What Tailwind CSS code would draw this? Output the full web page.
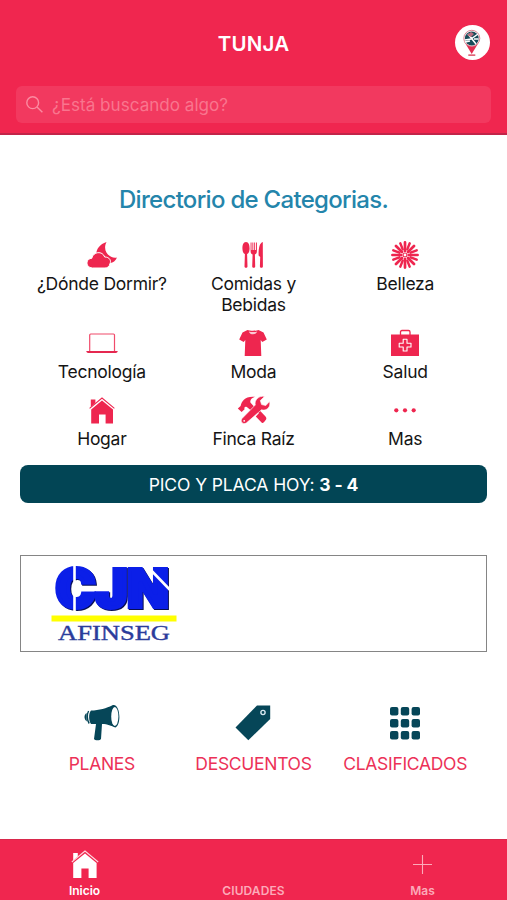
<!DOCTYPE html>
<html lang="es">
    <head>
        <meta charset="UTF-8">
        <meta name="viewport" content="width=device-width, initial-scale=1.0">
        <title>Tunja</title>
        <script src="https://cdn.jsdelivr.net/npm/@tailwindcss/browser@4"></script>
    </head>
    <body class="flex flex-col h-[900px] overflow-hidden bg-white text-[#151515] font-['Inter','Liberation_Sans',sans-serif]">

        <!-- HEADER -->
        <header class="flex flex-col h-[135px] shrink-0 bg-[#f0264f] border-b-2 border-[#c22449]">
            <div class="grid grid-cols-3 items-center h-[86px] px-4">
                <div></div>
                <h1 class="pt-[2px] text-center text-white text-[20.5px] font-semibold tracking-[0.2px]">TUNJA</h1>
                <div class="flex justify-end pr-px">
                    <div class="flex justify-center items-center size-[35px] mt-[-2px] rounded-full bg-white">
                        <svg class="w-[20px] h-[31px]" viewBox="0 0 20 31">
                            <path d="M2.5 15 L9.7 27 L17 15 Z" fill="#e32d50"/>
                            <circle cx="9.8" cy="11.3" r="8" fill="#fff" stroke="#d98493" stroke-width="1"/>
                            <circle cx="9.8" cy="11.5" r="6.9" fill="#174b59"/>
                            <path d="M3 13 L9 12 L16 7 M6 7 L10 12 L14 17 M3 15 L8 14 M12 12 L16.5 12" stroke="#fff" stroke-width="1.5" fill="none"/>
                            <path d="M5 8 L9 5 L12 7 L9 10 Z" fill="#b96b7d"/>
                            <rect x="6.3" y="27.3" width="7" height="1.7" fill="#e06478"/>
                        </svg>
                    </div>
                </div>
            </div>
            <div class="flex items-center gap-[9px] h-[37px] mx-4 px-[10px] rounded-md bg-[#f2395f] text-[#f9758e]">
                <svg class="size-[17px] text-[#fb8ba1]" viewBox="0 0 17 17" fill="none" stroke="currentColor" stroke-width="1.4">
                    <circle cx="6.7" cy="6.7" r="5.9"/>
                    <path d="M11 11 L16.4 16.2"/>
                </svg>
                <span class="pt-px text-[17.1px]">¿Está buscando algo?</span>
            </div>
        </header>
        <!-- /HEADER -->


        <main class="flex flex-col grow">
            <h2 class="mt-[50px] text-center text-[#2485ab] text-[24px] leading-[30px] font-medium tracking-[-0.7px]">Directorio de Categorias.</h2>

            <!-- CATEGORIES -->
            <div class="grid grid-cols-3 gap-y-[14px] mt-[26px] px-[26px] text-center text-[17.5px] leading-[21px] tracking-[-0.25px]">

                <div class="flex flex-col items-center gap-1">
                    <svg class="w-[32px] h-7" viewBox="0 0 32 28" fill="#ee264f">
                        <path d="M20.5 1 C13 3.5 9.5 9 10.5 15 L21 21 C25 23.5 29 21 31 16.5 C25 18.2 15.5 11 20.5 1 Z"/>
                        <path d="M6.5 27 C-1 26.5 -.5 17.5 5.8 17.3 C7 10.5 16.5 9.5 18.7 16 C23.5 16 25.5 19.5 24 22.5 C23.5 25.5 21.5 27 19 27 Z" stroke="#fff" stroke-width="1"/>
                    </svg>
                    <span>¿Dónde Dormir?</span>
                </div>

                <div class="flex flex-col items-center gap-1">
                    <svg class="w-[22px] h-7" viewBox="0 0 22 28" fill="#ee264f">
                        <path d="M4 1 C.7 1 .2 6 .5 8.5 C.7 11 1.5 12.4 2.9 13 L2.5 25.5 C2.5 27.3 5.5 27.3 5.5 25.5 L5.1 13 C6.5 12.4 7.3 11 7.5 8.5 C7.8 6 7.3 1 4 1 Z"/>
                        <path d="M8.6 1.5 H9.5 V9 H10.4 V1.5 H11.3 V9 H12.2 V1.5 H13.1 V9 H14 V1.5 H14.9 V10 C14.9 12.3 14 13 12.9 13.5 L13.2 25.5 C13.2 27.3 10.2 27.3 10.2 25.5 L10.6 13.5 C9.4 13 8.6 12.3 8.6 10 Z"/>
                        <path d="M20.8 1 C17.5 2 16.5 7 16.6 14.5 L18.2 16 L17.9 25.5 C17.9 27.3 20.9 27.3 20.9 25.5 Z"/>
                    </svg>
                    <span class="w-[110px]">Comidas y Bebidas</span>
                </div>

                <div class="flex flex-col items-center gap-1">
                    <svg class="size-7" viewBox="-14 -14 28 28" stroke="#ee264f" fill="none" stroke-linecap="round">
                        <path d="M0 -4 V-12.6 M0 4 V12.6 M-4 0 H-12.6 M4 0 H12.6 M3 -3 L9 -9 M3 3 L9 9 M-3 3 L-9 9 M-3 -3 L-9 -9" stroke-width="2.7"/>
                        <path d="M2.3 -5.6 L4.7 -11.7 M5.6 -2.3 L11.7 -4.7 M5.6 2.3 L11.7 4.7 M2.3 5.6 L4.7 11.7 M-2.3 5.6 L-4.7 11.7 M-5.6 2.3 L-11.7 4.7 M-5.6 -2.3 L-11.7 -4.7 M-2.3 -5.6 L-4.7 -11.7" stroke-width="2.4"/>
                        <circle r="2" stroke-width="1.2"/>
                    </svg>
                    <span>Belleza</span>
                </div>

                <div class="flex flex-col items-center gap-1">
                    <svg class="w-[32px] h-7" viewBox="0 0 32 28">
                        <rect x="3.7" y="5" width="24.8" height="18" rx="1" fill="none" stroke="#f04b6b" stroke-width="1.2"/>
                        <path d="M.3 22 H31.7 C31.7 23.5 30.5 24 29 24 H3 C1.5 24 .3 23.5 .3 22 Z" fill="#e52850"/>
                    </svg>
                    <span>Tecnología</span>
                </div>

                <div class="flex flex-col items-center gap-1">
                    <svg class="w-[28px] h-7" viewBox="0 0 28 28" fill="#ee264f">
                        <path d="M8.5 1 C10.5 2 17.5 2 19.5 1 L24.5 3.5 L27.8 10.5 L23.3 13 L21.7 11 L22.3 27 H5.7 L6.3 11 L4.7 13 L.2 10.5 L3.5 3.5 Z"/>
                        <path d="M9.8 2.4 C11 6.2 17 6.2 18.2 2.4 C16 3.2 12 3.2 9.8 2.4 Z" fill="#fff" fill-opacity=".75"/>
                    </svg>
                    <span>Moda</span>
                </div>

                <div class="flex flex-col items-center gap-1">
                    <svg class="w-[28px] h-7" viewBox="0 0 28 28">
                        <path d="M9.5 6 V3 Q9.5 1.5 11 1.5 H17.5 Q19 1.5 19 3 V6" fill="none" stroke="#ee264f" stroke-width="1.3"/>
                        <rect y="5.5" width="28" height="21.5" fill="#ee264f"/>
                        <path d="M12.2 10.2 H16 V14.2 H20 V18 H16 V22 H12.2 V18 H8.2 V14.2 H12.2 Z" fill="none" stroke="#fff" stroke-width="1.1" stroke-linejoin="round"/>
                    </svg>
                    <span>Salud</span>
                </div>

                <div class="flex flex-col items-center gap-1">
                    <svg class="w-[26px] h-7" viewBox="0 0 26 28" fill="#ee264f">
                        <path d="M1.8 3.5 H6.4 V7 L1.8 11 Z"/>
                        <path d="M.6 12.4 L13 2 L25.4 12.4" fill="none" stroke="#ee264f" stroke-width="1.1"/>
                        <path d="M13 4.4 L24 13.4 V27.5 H16.6 V18.5 H10 V27.5 H2.2 V13.4 Z"/>
                    </svg>
                    <span>Hogar</span>
                </div>

                <div class="flex flex-col items-center gap-1">
                    <svg class="w-[33px] h-7" viewBox="0 0 33 28" fill="#ee264f">
                        <path d="M15 12.5 L18 9.5 L28.5 20.5 C29.8 22 29.5 23.2 28.3 24.6 C27 26.5 26 27.4 24.8 26.8 L18.8 20.5 L22 17 Z"/>
                        <path d="M.8 12.6 L3.6 10 C4.5 5.5 8 -.2 18 .8 C14 2.2 12.6 4.8 13.6 6.8 L17 10.5 L13.5 14 L9.8 11 C7.6 9.8 7 12 7.6 13.3 L4.6 16 Z"/>
                        <path d="M27.5 .6 L23.3 4.6 L24.6 8.6 L28.8 9.6 L32.5 5.6 C34 10.6 30 15.3 24.5 13.8 L9.5 26.8 C6.5 29 2.5 26 5 22.5 L18.3 9 C17 4 22.3 -.8 27.5 .6 Z" stroke="#fff" stroke-width=".6"/>
                        <circle cx="7.2" cy="24.8" r=".9" fill="#fff"/>
                    </svg>
                    <span>Finca Raíz</span>
                </div>

                <div class="flex flex-col items-center gap-1">
                    <svg class="w-[24px] h-7" viewBox="0 0 24 28" fill="#ee264f">
                        <circle cx="3.3" cy="14.3" r="2.1"/>
                        <circle cx="12" cy="14.3" r="2.1"/>
                        <circle cx="20.7" cy="14.3" r="2.1"/>
                    </svg>
                    <span>Mas</span>
                </div>

            </div>
            <!-- /CATEGORIES -->

            <div class="flex justify-center items-center h-[38px] mt-4 mx-5 pt-[2px] rounded-lg bg-[#024555] text-white text-[17.5px] tracking-[-0.1px]">
                <span>PICO Y PLACA HOY: <b>3 - 4</b></span>
            </div>

            <!-- Sponsor -->
            <div class="h-[97px] mt-[52px] mx-5 pl-[30px] pt-[10px] border border-[#858585]">
                <svg class="w-[130px] h-[78px] overflow-visible" viewBox="0 0 130 78">
                    <g class="drop-shadow-[1px_1px_0_#070d50]" font-family="Inter" font-size="52" font-weight="900" fill="#0b1fe8" stroke="#0b1fe8" stroke-width="4">
                        <text x="4.5" y="41" textLength="113" lengthAdjust="spacingAndGlyphs">CJN</text>
                    </g>
                    <!-- cuts through the mark -->
                    <path d="M23.5 0 V46 M94 -2 L122 27" stroke="#fff" stroke-width="2.6"/>
                    <rect x="0.5" y="49.5" width="125" height="6" fill="#ffff00"/>
                    <text x="7" y="73.5" textLength="112" lengthAdjust="spacingAndGlyphs" font-family="Liberation Serif" font-size="22" fill="#2b3c9b" stroke="#2b3c9b" stroke-width=".4">AFINSEG</text>
                </svg>
            </div>
            <!-- /Sponsor -->

            <!-- Shortcuts -->
            <div class="grid grid-cols-3 mt-[50px] px-[26px] text-center text-[17.5px] leading-[21px] tracking-[-0.3px] text-[#ec3157]">
                <div class="flex flex-col items-center gap-[11px]">
                    <svg class="w-[36px] h-[40px]" viewBox="0 0 36 40" fill="#064658">
                        <path d="M7 8.5 C15 8.5 23 6 28 3.5 C36 0 38 22 31.5 25.5 C27 24 24 22 18 22 L17 37 C16 39 10.5 38.5 10 37 L12 22 H7 C4.5 19 4.5 11 7 8.5 Z"/>
                        <path d="M4.6 9 C2.8 12 2.8 18 5.2 21.5" fill="none" stroke="#064658" stroke-width="1.4"/>
                        <path d="M2.6 11 C-.2 13 -.2 17 2.8 19.5 Z"/>
                        <ellipse cx="30.8" cy="14.5" rx="3.6" ry="9.5" fill="#fff"/>
                    </svg>
                    <span>PLANES</span>
                </div>
                <div class="flex flex-col items-center gap-[11px]">
                    <svg class="w-[36px] h-[40px]" viewBox="0 0 36 40">
                        <path d="M.5 25.5 L22 3.5 H35.2 V17 L13.3 38.3 Z" fill="#064658"/>
                        <circle cx="28" cy="10.5" r="2.1" fill="#064658" stroke="#d9e8f0" stroke-width="1.4"/>
                    </svg>
                    <span>DESCUENTOS</span>
                </div>
                <div class="flex flex-col items-center gap-[11px]">
                    <svg class="w-[30px] h-[40px]" viewBox="0 0 30 40" fill="#064658">
                        <rect x="0" y="5" width="8.4" height="8.4" rx="2"/>
                        <rect x="10.8" y="5" width="8.4" height="8.4" rx="2"/>
                        <rect x="21.6" y="5" width="8.4" height="8.4" rx="2"/>
                        <rect x="0" y="17" width="8.4" height="8.4" rx="2"/>
                        <rect x="10.8" y="17" width="8.4" height="8.4" rx="2"/>
                        <rect x="21.6" y="17" width="8.4" height="8.4" rx="2"/>
                        <rect x="0" y="29" width="8.4" height="8.4" rx="2"/>
                        <rect x="10.8" y="29" width="8.4" height="8.4" rx="2"/>
                        <rect x="21.6" y="29" width="8.4" height="8.4" rx="2"/>
                    </svg>
                    <span>CLASIFICADOS</span>
                </div>
            </div>
            <!-- /Shortcuts -->
        </main>


        <!-- TABS -->
        <footer class="grid grid-cols-3 h-[61px] shrink-0 border-t border-[#d9284c] bg-[#f0264f] text-center text-[12px] leading-[15px] font-semibold text-[#fcaab9]">
            <div class="flex flex-col items-center justify-end pb-[2px] gap-[4px] text-white">
                <svg class="w-[28px] h-[30px]" viewBox="0 0 28 30" fill="#fff">
                    <path d="M2.2 4 H6.8 V7.5 L2.2 11.5 Z"/>
                    <path d="M.8 13 L14 2 L27.2 13" fill="none" stroke="#ffd5dd" stroke-width="1.1"/>
                    <path d="M14 4.6 L25.6 14 V29 H17.6 V19.5 H10.4 V29 H2.2 V14 Z"/>
                </svg>
                <span>Inicio</span>
            </div>
            <div class="flex flex-col items-center justify-end pb-[2px]">
                <span class="tracking-[0.1px]">CIUDADES</span>
            </div>
            <div class="flex flex-col items-center justify-end pb-[2px] gap-[9px]">
                <svg class="size-[19px]" viewBox="0 0 19 19" fill="none" stroke="currentColor" stroke-width="1.1">
                    <path d="M9.5 0 V19 M0 9.5 H19"/>
                </svg>
                <span>Mas</span>
            </div>
        </footer>
        <!-- /TABS -->

    </body>
</html>
